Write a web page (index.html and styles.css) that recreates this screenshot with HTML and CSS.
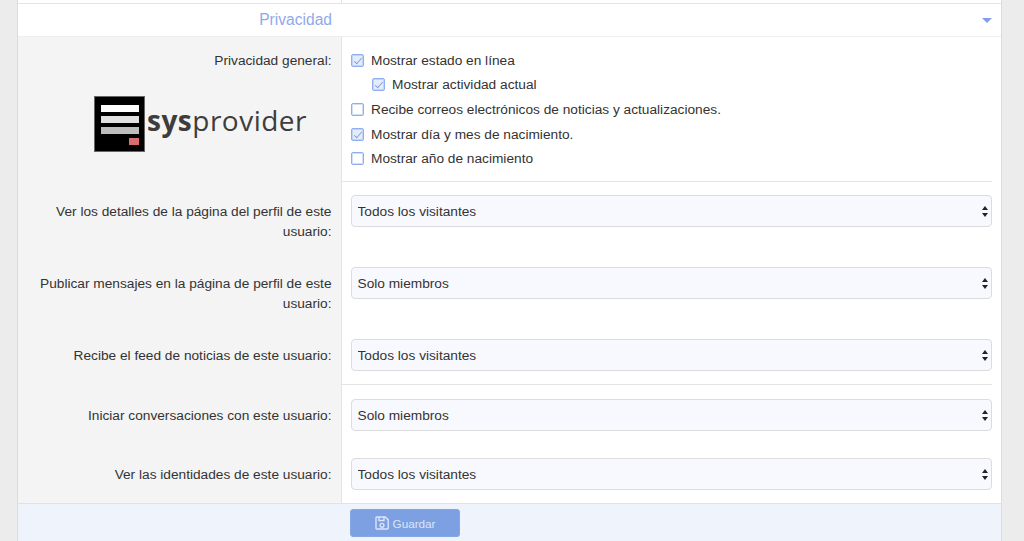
FILE: index.html
```html
<!DOCTYPE html>
<html lang="es">
<head>
<meta charset="utf-8">
<title>Privacidad</title>
<link rel="stylesheet" href="styles.css">
</head>
<body>
<div class="panel">
  <div class="strip"><div class="strip-left"></div></div>
  <h3 class="heading"><span class="heading-title">Privacidad</span><span class="caret"></span></h3>
  <form class="form">
    <div class="row row-first">
      <div class="label">
        <div class="label-text">Privacidad general:</div>
        <div class="logo">
          <svg class="logo-mark" width="51" height="56" viewBox="0 0 51 56"><rect x=".5" y=".5" width="50" height="55" fill="#000" stroke="#666"/><rect x="7" y="9" width="38" height="7" fill="#fff"/><rect x="7" y="20" width="38" height="7" fill="#e0e0e0"/><rect x="7" y="31" width="38" height="7" fill="#bdbdbd"/><rect x="35" y="42" width="10" height="7" fill="#d96c6c"/></svg>
          <span class="logo-text"><b>sys</b>provider</span>
        </div>
      </div>
      <div class="field field-checks">
        <label class="check"><input type="checkbox" checked><span>Mostrar estado en línea</span></label>
        <label class="check check-sub"><input type="checkbox" checked><span>Mostrar actividad actual</span></label>
        <label class="check"><input type="checkbox"><span>Recibe correos electrónicos de noticias y actualizaciones.</span></label>
        <label class="check"><input type="checkbox" checked><span>Mostrar día y mes de nacimiento.</span></label>
        <label class="check"><input type="checkbox"><span>Mostrar año de nacimiento</span></label>
      </div>
    </div>
    <div class="row">
      <div class="label label-select">Ver los detalles de la página del perfil de este usuario:</div>
      <div class="field">
        <div class="select-wrap"><select class="select"><option>Todos los visitantes</option></select><svg class="arrows" width="6" height="11" viewBox="0 0 6 11"><path d="M3 0L6 4H0zM3 11L0 7h6z"/></svg></div>
      </div>
    </div>
    <div class="row">
      <div class="label label-select">Publicar mensajes en la página de perfil de este usuario:</div>
      <div class="field">
        <div class="select-wrap"><select class="select"><option>Solo miembros</option></select><svg class="arrows" width="6" height="11" viewBox="0 0 6 11"><path d="M3 0L6 4H0zM3 11L0 7h6z"/></svg></div>
      </div>
    </div>
    <div class="row">
      <div class="label label-select">Recibe el feed de noticias de este usuario:</div>
      <div class="field field-ruled">
        <div class="select-wrap"><select class="select"><option>Todos los visitantes</option></select><svg class="arrows" width="6" height="11" viewBox="0 0 6 11"><path d="M3 0L6 4H0zM3 11L0 7h6z"/></svg></div>
      </div>
    </div>
    <div class="row">
      <div class="label label-select">Iniciar conversaciones con este usuario:</div>
      <div class="field">
        <div class="select-wrap"><select class="select"><option>Solo miembros</option></select><svg class="arrows" width="6" height="11" viewBox="0 0 6 11"><path d="M3 0L6 4H0zM3 11L0 7h6z"/></svg></div>
      </div>
    </div>
    <div class="row">
      <div class="label label-select">Ver las identidades de este usuario:</div>
      <div class="field">
        <div class="select-wrap"><select class="select"><option>Todos los visitantes</option></select><svg class="arrows" width="6" height="11" viewBox="0 0 6 11"><path d="M3 0L6 4H0zM3 11L0 7h6z"/></svg></div>
      </div>
    </div>
    <div class="footer">
      <button type="button" class="button">
        <svg width="14" height="14" viewBox="0 0 14 14" fill="none" stroke="currentColor" stroke-width="1.4"><path d="M1.7 1h8.6l2.9 2.9v8.4a.7.7 0 0 1-.7.7H1.7a.7.7 0 0 1-.7-.7V1.700a.7.7 0 0 1 .7-.7z"/><path d="M4 1v3.500h5V1"/><circle cx="7" cy="9.300" r="1.900"/></svg>
        <span>Guardar</span>
      </button>
    </div>
  </form>
</div>
</body>
</html>
```
FILE: styles.css
```css
* { box-sizing: border-box; }
html, body { margin: 0; height: 100%; overflow: hidden; }
body {
  background: #ececec;
  font-family: "Liberation Sans", Arial, sans-serif;
  font-size: 13.700px;
  color: #333;
  padding: 0 22px 0 17px;
}
.panel {
  background: #fff;
  border-left: 1px solid #dcdcdc;
  border-right: 1px solid #dcdcdc;
  height: 541px;
  display: flex;
  flex-direction: column;
}
.strip {
  height: 4px;
  border-bottom: 1px solid #e4e4e4;
}
.strip-left {
  width: 324px;
  height: 3px;
  border-right: 1px solid #e4e4e4;
}
.heading {
  margin: 0;
  height: 33px;
  display: grid;
  grid-template-columns: 314px 1fr;
  align-items: center;
  font-size: 15.600px;
  font-weight: 400;
  color: #90a9ea;
  border-bottom: 1px solid #efefef;
}
.heading-title { text-align: right; }
.caret {
  justify-self: end;
  margin-right: 9px;
  width: 0;
  height: 0;
  border-left: 5px solid transparent;
  border-right: 5px solid transparent;
  border-top: 5px solid #7f9fe8;
}
.form { display: flex; flex-direction: column; flex: 1; }
.row {
  display: grid;
  grid-template-columns: 324px 1fr;
}
.row-first { margin-bottom: -1px; }
.label {
  background: #f4f4f4;
  border-right: 1px solid #e4e4e4;
  text-align: right;
  line-height: 19.500px;
  padding: 0 9.500px 0 10px;
}
.label-select { padding-top: 21px; padding-bottom: 12px; }
.label-text { padding-top: 14px; }
.logo {
  display: flex;
  align-items: flex-end;
  justify-content: flex-start;
  gap: 2px;
  margin: 25px 0 0 66px;
  height: 56px;
  text-align: left;
}
.logo-mark { flex: none; }
.logo-text {
  font-family: "Open Sans", sans-serif;
  font-size: 28px;
  line-height: 1;
  letter-spacing: .5px;
  color: #3d3d3d;
  padding-bottom: 18px;
}
.logo-text b { font-weight: 700; }
.field {
  padding: 14px 9px 13px 9px;
}
.field-checks {
  padding: 11px 0 10px 9px;
  margin-right: 9px;
  border-bottom: 1px solid #e4e4e4;
  height: 145px;
}
.field-ruled {
  padding-bottom: 13px;
  position: relative;
  border-bottom: 1px solid #e4e4e4;
  margin-right: 9px;
  padding-right: 0;
}
.check {
  display: flex;
  align-items: center;
  gap: 7px;
  height: 24.600px;
}
.check-sub { padding-left: 21px; }
.check input {
  appearance: none;
  -webkit-appearance: none;
  position: relative;
  flex: none;
  margin: 0;
  width: 13px;
  height: 13px;
  border: 1px solid #8fadf0;
  box-shadow: inset 0 0 0 1px rgba(154, 183, 240, .45);
  border-radius: 2px;
  background: #fff;
}
.check input:checked { background: #e4ecfb; }
.check input:checked::after {
  content: "";
  position: absolute;
  left: 3.500px;
  top: 1px;
  width: 3px;
  height: 7px;
  border: solid #7f9fe0;
  border-width: 0 1.500px 1.500px 0;
  transform: rotate(42deg);
}
.select-wrap { position: relative; height: 32px; }
.select {
  appearance: none;
  -webkit-appearance: none;
  display: block;
  width: 100%;
  height: 32px;
  padding: 0 5.500px;
  border: 1px solid #dcdcdc;
  border-radius: 4px;
  background: #f8f9fe;
  font: inherit;
  color: #333;
}
.arrows {
  position: absolute;
  right: 4px;
  top: 11px;
  fill: #222;
  pointer-events: none;
}
.footer {
  flex: 1;
  background: #eff3fb;
  border-top: 1px solid #dfe2e8;
  padding: 5px 0 0 332px;
}
.button {
  display: flex;
  align-items: center;
  justify-content: center;
  gap: 4px;
  width: 110px;
  height: 28px;
  padding: 0;
  border: 1px solid #84a6e3;
  border-radius: 3px;
  background: #7ca0e2;
  color: #dbe6f9;
  font: inherit;
  font-size: 11.700px;
}
```
